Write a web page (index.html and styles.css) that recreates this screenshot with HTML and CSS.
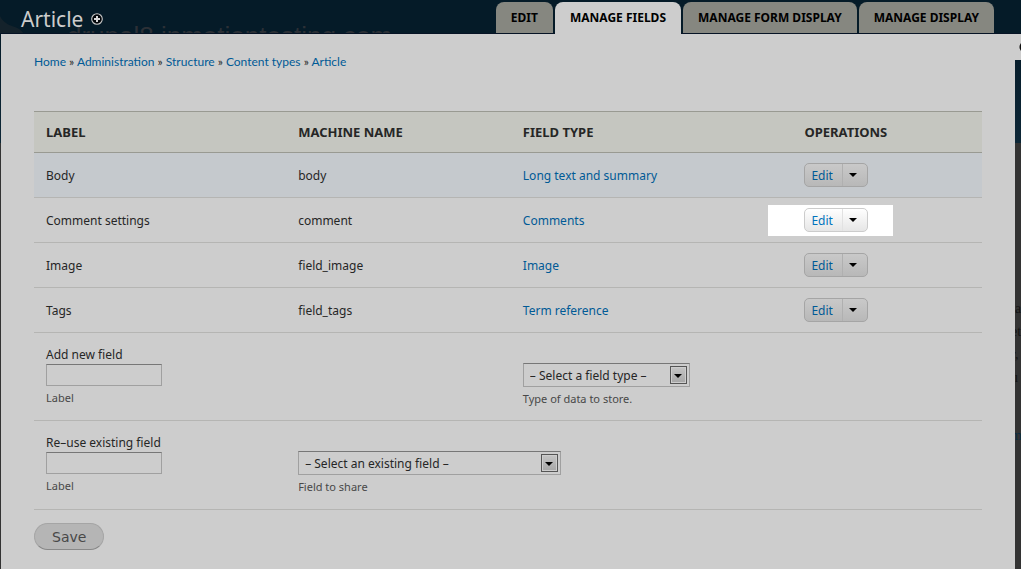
FILE: index.html
```html
<!DOCTYPE html>
<html lang="en">
<head>
    <meta charset="UTF-8">
    <meta name="viewport" content="width=device-width, initial-scale=1.0">
    <title>Article | Manage fields</title>
    <link rel="stylesheet" href="styles.css">
</head>
<body>
    <!-- Dimmed site under the overlay -->
    <div class="site" aria-hidden="true">
        <svg class="site-logo" width="24" height="18" viewBox="0 0 24 18"><path d="M0 18V0C3 7 11 10 15 11C20 13 22 15 24 18Z" fill="#14222b"/></svg>
        <div class="site-name">drupal8.inmotiontesting.com</div>
        <div class="site-text">la<br>et<br>r,<br>u</div>
        <div class="site-link">m</div>
    </div>

    <div class="overlay">
        <header class="overlay-header">
            <div class="title">
                <h1>Article</h1>
                <button class="add-shortcut" type="button" aria-label="Add to shortcuts">
                    <svg width="12" height="12" viewBox="0 0 12 12">
                        <circle cx="6" cy="6" r="5.3" fill="#020509" stroke="#c8c8c8" stroke-width="1.1"/>
                        <path d="M6 3V9M3 6H9" stroke="#d8d8d8" stroke-width="2"/>
                    </svg>
                </button>
            </div>
            <nav class="tabs">
                <a href="#">EDIT</a>
                <a href="#" class="active">MANAGE FIELDS</a>
                <a href="#">MANAGE FORM DISPLAY</a>
                <a href="#">MANAGE DISPLAY</a>
            </nav>
        </header>

        <main class="panel">
            <button class="close" type="button" aria-label="Close overlay"></button>
            <nav class="breadcrumb">
                <a href="#">Home</a> » <a href="#">Administration</a> » <a href="#">Structure</a> » <a href="#">Content types</a> » <a href="#">Article</a>
            </nav>

            <form>
                <table class="fields">
                    <thead>
                        <tr>
                            <th class="col-label">LABEL</th>
                            <th class="col-name">MACHINE NAME</th>
                            <th class="col-type">FIELD TYPE</th>
                            <th class="col-ops">OPERATIONS</th>
                        </tr>
                    </thead>
                    <tbody>
                        <tr class="hover">
                            <td>Body</td>
                            <td>body</td>
                            <td><a href="#">Long text and summary</a></td>
                            <td><div class="dropbutton"><a href="#">Edit</a><button type="button" aria-label="More actions"></button></div></td>
                        </tr>
                        <tr>
                            <td>Comment settings</td>
                            <td>comment</td>
                            <td><a href="#">Comments</a></td>
                            <td><div class="spotlight"><div class="dropbutton"><a href="#">Edit</a><button type="button" aria-label="More actions"></button></div></div></td>
                        </tr>
                        <tr>
                            <td>Image</td>
                            <td>field_image</td>
                            <td><a href="#">Image</a></td>
                            <td><div class="dropbutton"><a href="#">Edit</a><button type="button" aria-label="More actions"></button></div></td>
                        </tr>
                        <tr>
                            <td>Tags</td>
                            <td>field_tags</td>
                            <td><a href="#">Term reference</a></td>
                            <td><div class="dropbutton"><a href="#">Edit</a><button type="button" aria-label="More actions"></button></div></td>
                        </tr>
                        <tr class="add-row">
                            <td>
                                <label for="new-label">Add new field</label>
                                <input type="text" id="new-label">
                                <div class="description">Label</div>
                            </td>
                            <td></td>
                            <td>
                                <div class="select select-type">
                                    <select id="new-type" aria-labelledby="new-type-desc"><option>– Select a field type –</option></select>
                                </div>
                                <label class="description" id="new-type-desc" for="new-type">Type of data to store.</label>
                            </td>
                            <td></td>
                        </tr>
                        <tr class="add-row">
                            <td>
                                <label for="reuse-label">Re–use existing field</label>
                                <input type="text" id="reuse-label">
                                <div class="description">Label</div>
                            </td>
                            <td colspan="3">
                                <div class="select select-existing">
                                    <select id="reuse-field" aria-labelledby="reuse-desc"><option>– Select an existing field –</option></select>
                                </div>
                                <label class="description" id="reuse-desc" for="reuse-field">Field to share</label>
                            </td>
                        </tr>
                    </tbody>
                </table>
                <button class="save" type="submit">Save</button>
            </form>
        </main>
    </div>
</body>
</html>
```

FILE: styles.css
```css
*,
*::before,
*::after {
    box-sizing: border-box;
}
body {
    margin: 0;
    font-family: "Noto Sans", "Open Sans", sans-serif;
    font-size: 12px;
    line-height: 18px;
    color: #262626;
    background: #333;
    overflow: hidden;
}
a {
    color: #005a96;
    text-decoration: none;
}

/* Site behind the overlay */
.site {
    position: absolute;
    top: 0;
    left: 0;
    right: 0;
    height: 143px;
    background: linear-gradient(#051b28 34px, #0d2737);
}
.site-logo {
    position: absolute;
    top: 16px;
    left: 0;
}
.site-name {
    position: absolute;
    top: 22px;
    left: 67px;
    font: 26px/28px "Liberation Sans", Arial, sans-serif;
    color: #2c3036;
}
.site-text,
.site-link {
    position: absolute;
    top: 297px;
    left: 100%;
    margin-left: -10px;
    font: 14px/23px "Liberation Serif", serif;
    color: #151515;
}
.site-link {
    top: 424px;
    color: #0c2d42;
}

/* Overlay */
.overlay {
    position: relative;
    display: flex;
    flex-direction: column;
    min-height: 100vh;
}
.overlay-header {
    display: flex;
    justify-content: space-between;
    height: 34px;
    padding: 2px 27px 0 21px;
    border-bottom: 1px solid #061325;
}
.title {
    display: flex;
    align-items: center;
    gap: 8px;
    height: 34px;
}
h1 {
    margin: 0;
    font-size: 21px;
    font-weight: normal;
    line-height: 34px;
    color: #ccc;
}
.add-shortcut {
    display: flex;
    padding: 0;
    border: 0;
    background: none;
}
.tabs {
    display: flex;
    gap: 2px;
}
.tabs a {
    height: 31px;
    padding: 0 15px;
    border-radius: 8px 8px 0 0;
    background: #868780;
    font-weight: bold;
    line-height: 32px;
    color: #000;
}
.tabs .active {
    height: 32px;
    background: #cdcdcd;
}
.panel {
    position: relative;
    flex: 1;
    margin: 0 6px 0 1px;
    padding: 19px 33px;
    background: #cdcdcd;
}
.close {
    position: absolute;
    top: 0;
    left: 100%;
    width: 26px;
    height: 26px;
    border: 0;
    background: radial-gradient(circle at 10px 13px, #111 5px, #cdcdcd 6px);
}
.breadcrumb {
    margin-bottom: 40px;
    font-family: Lato, "Noto Sans", sans-serif;
}

/* Fields table */
.fields {
    width: 100%;
    table-layout: fixed;
    border-spacing: 0;
    margin-bottom: 13px;
}
.col-label {
    width: 26.6%;
}
.col-name {
    width: 23.7%;
}
.col-type {
    width: 29.7%;
}
th {
    height: 42px;
    padding: 0 12px;
    border-top: 1px solid #999a92;
    border-bottom: 1px solid #999a92;
    background: #c5c6c0;
    font-size: 13px;
    text-align: left;
}
td {
    height: 45px;
    padding: 2px 12px 0;
    border-bottom: 1px solid #b5b5b3;
}
td:last-child {
    padding-top: 0;
}
.hover td {
    background: #c5c9cd;
}
.dropbutton {
    position: relative;
    display: flex;
    width: 64px;
    height: 24px;
    border: 1px solid #a5a5a5;
    border-radius: 5px;
    background: linear-gradient(#c9c9c9, #b8b8b8);
    line-height: 23px;
}
.dropbutton a {
    flex: 1;
    padding-left: 6px;
}
.dropbutton button {
    display: flex;
    align-items: center;
    width: 25px;
    padding: 0 0 0 6px;
    border: 0;
    border-left: 1px solid #b0b0b0;
    background: none;
}
.dropbutton button::before {
    content: "";
    border: 4px solid transparent;
    border-top-color: #000;
    border-bottom: 0;
}
.spotlight {
    position: relative;
    width: 64px;
}
.spotlight::before {
    content: "";
    position: absolute;
    inset: -3px -25px -4px -36px;
    background: #fff;
}
.spotlight .dropbutton {
    border-color: #ccc;
    background: linear-gradient(#fff, #e6e6e6);
}
.spotlight a {
    color: #0074bd;
}
.spotlight button {
    border-color: #e2e2e2;
}

/* New field rows */
.add-row td {
    height: 88px;
    padding: 13px 12px;
    vertical-align: top;
}
.add-row:last-child td {
    height: 89px;
}
.add-row td + td {
    padding-top: 30px;
}
label {
    display: block;
}
input {
    display: block;
    width: 116px;
    height: 22px;
    border: 1px solid #a0a0a0;
    border-top-color: #777;
    background: #cdcdcd;
}
.description {
    margin-top: 4px;
    font-size: 11px;
    line-height: 16px;
    color: #484848;
}
.select {
    position: relative;
}
.select-type {
    width: 167px;
}
.select-existing {
    width: 263px;
}
select {
    display: block;
    appearance: none;
    width: 100%;
    height: 24px;
    padding: 2px 6px 0;
    border: 1px solid #a0a0a0;
    border-top-color: #777;
    border-radius: 0;
    background: #cdcdcd;
    font: inherit;
    color: #262626;
}
.select::before {
    content: "";
    position: absolute;
    top: 3px;
    right: 3px;
    width: 17px;
    height: 18px;
    border: 1px solid #555;
    background: linear-gradient(#c5c5c5, #a6a6a6);
    box-shadow: inset 0 0 0 1px #cdcdcd;
    pointer-events: none;
}
.select::after {
    content: "";
    position: absolute;
    top: 11px;
    right: 8px;
    border: 4px solid transparent;
    border-top-color: #000;
    border-bottom: 0;
    pointer-events: none;
}
.save {
    display: block;
    height: 27px;
    padding: 0 17px;
    border: 1px solid #a5a5a5;
    border-bottom-color: #888;
    border-radius: 14px;
    background: #b5b5b5;
    font: 14px/20px "DejaVu Sans", Verdana, sans-serif;
    color: #484848;
}
```
